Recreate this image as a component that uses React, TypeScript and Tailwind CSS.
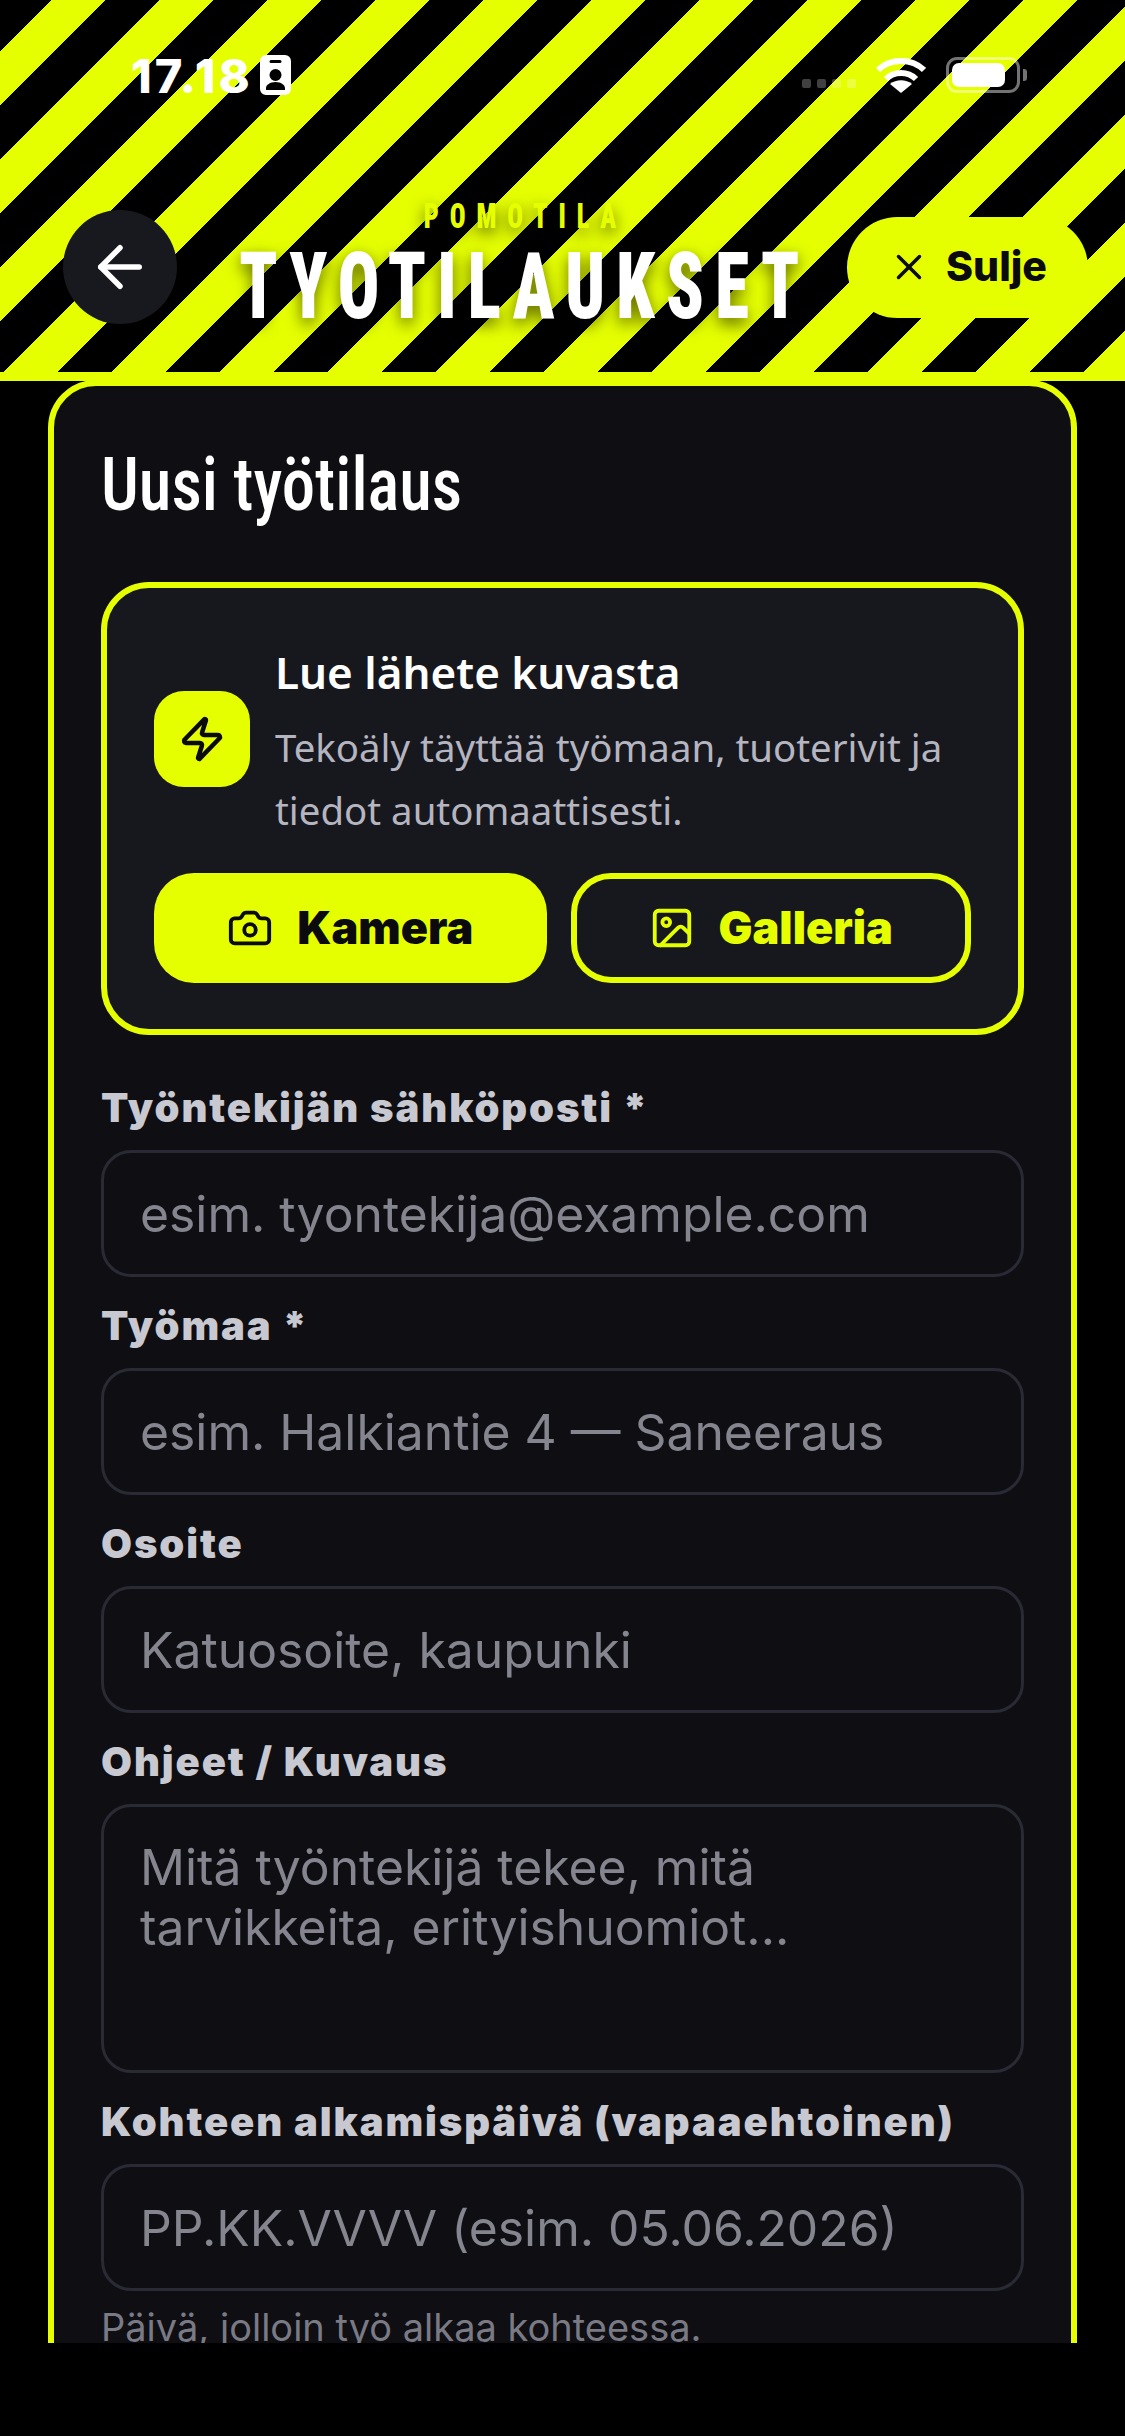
import { ArrowLeft, Camera, Image, X, Zap } from "lucide-react";

const narrow = "[font-family:Roboto,sans-serif] [font-stretch:75%]";
const inputClass =
  "block w-full rounded-[30px] border-[3px] border-[#2a2a35] bg-transparent px-[36px] [font-family:Inter,sans-serif] text-[49.8px] text-white outline-none placeholder:text-[#85858f]";
const labelClass =
  "mb-[20px] block [font-family:Inter,sans-serif] text-[40px] leading-[45px] font-black tracking-[1.9px] text-[#c8c8d0]";

function Field({ label, placeholder, first }: { label: string; placeholder: string; first?: boolean }) {
  return (
    <div className={first ? "mt-[50px]" : "mt-[26px]"}>
      <label className={labelClass}>{label}</label>
      <input className={`${inputClass} h-[127px]`} placeholder={placeholder} />
    </div>
  );
}

function StatusBar() {
  return (
    <div className="flex h-[44px] items-center justify-between pr-[98px] pl-[131px]">
      <div className="flex items-center gap-[7px]">
        <span className="[font-family:Inter,sans-serif] text-[47px] leading-none font-extrabold tracking-[3px] text-white">17.18</span>
        <svg width="31" height="40" viewBox="0 0 31 40">
          <path
            fill="#fff"
            fillRule="evenodd"
            d="M6 0h19a6 6 0 0 1 6 6v28a6 6 0 0 1-6 6H6a6 6 0 0 1-6-6V6a6 6 0 0 1 6-6zM11 5a1.5 1.5 0 0 0 0 3h9a1.5 1.5 0 0 0 0-3zM15.500 14a6 6 0 1 0 0 12 6 6 0 0 0 0-12zM6 35h19v-2c0-3-4-6-9.500-6S6 30 6 33z"
          />
        </svg>
      </div>
      <div className="flex items-center">
        <div className="mt-[16px] mr-[20px] flex gap-[6px]">
          <span className="h-[9px] w-[9px] rounded-[2px] bg-white/25" />
          <span className="h-[9px] w-[9px] rounded-[2px] bg-white/25" />
          <span className="h-[9px] w-[9px] rounded-[2px] bg-white/25" />
          <span className="h-[9px] w-[9px] rounded-[2px] bg-white/25" />
        </div>
        <svg width="50" height="36" viewBox="0 0 50 36" fill="none" stroke="#fff" strokeWidth="6">
          <path d="M2 13C14 1 36 1 48 13" />
          <path d="M10 22c8-8 22-8 30 0" />
          <path fill="#fff" stroke="none" d="M25 36 14 27c6-5 16-5 22 0z" />
        </svg>
        <div className="ml-[20px] flex items-center">
          <div className="h-[36px] w-[74px] rounded-[11px] border-[3px] border-white/45 p-[3px]">
            <div className="h-full w-[53px] rounded-[7px] bg-white" />
          </div>
          <div className="ml-[3px] h-[12px] w-[4px] rounded-r-[3px] bg-white/45" />
        </div>
      </div>
    </div>
  );
}

export default function App() {
  return (
    <div className="flex h-[2436px] w-[1125px] flex-col overflow-hidden bg-black">
      <header className="h-[381px] shrink-0 border-b-[9px] border-[#e5ff00] bg-[repeating-linear-gradient(135deg,#000_0,#000_36.27px,#e5ff00_36.27px,#e5ff00_74.46px,#000_74.46px,#000_76.37px)] pt-[53px]">
        <StatusBar />
        <div className="mt-[100px] flex items-center pr-[37px] pl-[63px]">
          <button className="flex h-[114px] w-[114px] shrink-0 items-center justify-center rounded-full bg-[#18181f] text-white">
            <ArrowLeft size={66} strokeWidth={2} />
          </button>
          <div className={`flex min-w-0 flex-1 flex-col items-center pl-[26px] text-center ${narrow}`}>
            <div className="scale-x-[0.75] text-[35px] leading-[40px] font-black tracking-[14.500px] whitespace-nowrap text-[#e5ff00] [text-shadow:0_6px_18px_rgba(0,0,0,0.6)]">
              POMOTILA
            </div>
            <div className="scale-x-[0.75] text-[92px] leading-[100px] font-black tracking-[15px] whitespace-nowrap text-white [text-shadow:0_6px_18px_rgba(0,0,0,0.6)]">
              TYOTILAUKSET
            </div>
          </div>
          <button className="flex h-[101px] w-[241px] shrink-0 items-center justify-center gap-[16px] rounded-full bg-[#e5ff00] [font-family:Inter,sans-serif] text-[41px] font-extrabold text-[#0a0a0f]">
            <X size={42} strokeWidth={2} />
            Sulje
          </button>
        </div>
      </header>

      <main className="min-h-0 flex-1 overflow-hidden px-[48px]">
        <div className="-mt-px rounded-[48px] border-[6px] border-[#e5ff00] bg-[#0e0e13] px-[47px] pt-[48px] pb-[48px]">
          <h2 className={`mb-[48px] origin-left scale-x-[0.89] text-[75px] leading-[100px] font-medium text-white ${narrow}`}>Uusi työtilaus</h2>

          <section className="rounded-[48px] border-[6px] border-[#e5ff00] bg-[#17171e] px-[47px] py-[46px]">
            <div className="flex items-center gap-[25px]">
              <div className="mt-[2px] flex h-[96px] w-[96px] shrink-0 items-center justify-center rounded-[30px] bg-[#e5ff00] text-[#0a0a0f]">
                <Zap size={48} strokeWidth={2.25} />
              </div>
              <div className="pt-[6px] [font-family:'Noto_Sans',sans-serif]">
                <div className="text-[44px] leading-[64px] font-semibold text-white">Lue lähete kuvasta</div>
                <p className="mt-[12px] text-[38.4px] leading-[63px] text-[#b5b5c0]">
                  Tekoäly täyttää työmaan, tuoterivit ja tiedot automaattisesti.
                </p>
              </div>
            </div>
            <div className="mt-[31px] flex gap-[24px] [font-family:Inter,sans-serif] text-[45px] font-black">
              <button className="flex h-[110px] w-[393px] items-center justify-center gap-[24px] rounded-[40px] bg-[#e5ff00] text-[#0a0a0f]">
                <Camera size={46} strokeWidth={2} />
                Kamera
              </button>
              <button className="flex h-[110px] w-[401px] items-center justify-center gap-[24px] rounded-[40px] border-[6px] border-[#e5ff00] text-[#e5ff00]">
                <Image size={46} strokeWidth={2} />
                Galleria
              </button>
            </div>
          </section>

          <Field first label="Työntekijän sähköposti *" placeholder="esim. tyontekija@example.com" />
          <Field label="Työmaa *" placeholder="esim. Halkiantie 4 — Saneeraus" />
          <Field label="Osoite" placeholder="Katuosoite, kaupunki" />

          <div className="mt-[26px]">
            <label className={labelClass}>Ohjeet / Kuvaus</label>
            <textarea
              className={`${inputClass} h-[269px] resize-none py-[30px] leading-[60px]`}
              placeholder="Mitä työntekijä tekee, mitä tarvikkeita, erityishuomiot..."
            />
          </div>

          <Field label="Kohteen alkamispäivä (vapaaehtoinen)" placeholder="PP.KK.VVVV (esim. 05.06.2026)" />
          <p className="mt-[12px] [font-family:Inter,sans-serif] text-[38px] leading-[48px] text-[#7a7a85]">
            Päivä, jolloin työ alkaa kohteessa.
          </p>
        </div>
      </main>

      <div className="h-[93px] shrink-0 bg-black" />
    </div>
  );
}
